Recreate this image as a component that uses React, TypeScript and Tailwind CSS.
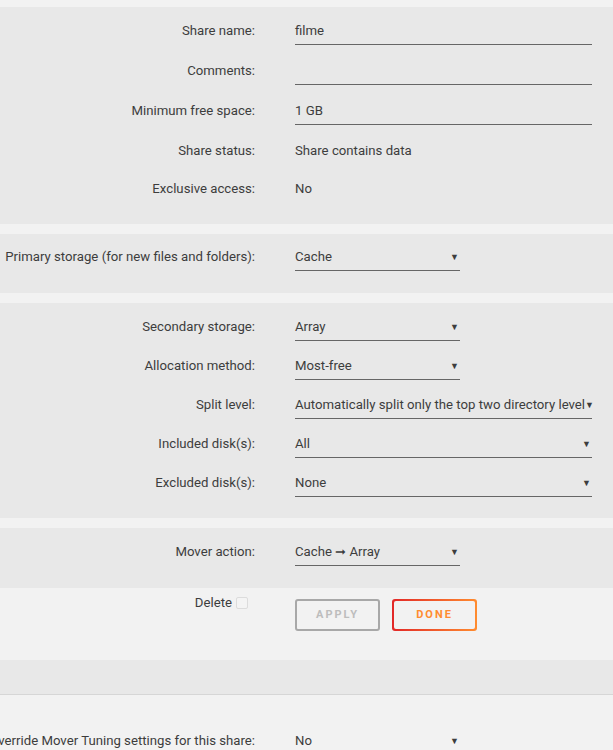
import React from 'react';

type RowProps = {
  label: string;
  children: React.ReactNode;
  h?: string;
};

const Row: React.FC<RowProps> = ({ label, children, h = 'h-[40px]' }) => (
  <div className={`flex items-start ${h}`}>
    <div className="w-[255px] shrink-0 flex justify-end overflow-hidden pt-[6px] leading-5">
      <span className="whitespace-nowrap">{label}</span>
    </div>
    <div className="ml-[40px] flex-1 pr-[21px]">{children}</div>
  </div>
);

const TextInput = ({ value }: { value: string }) => (
  <div className="h-[30px] pt-[6px] leading-5 border-b border-[#666] w-[297px]">{value}</div>
);

const Select = ({ value, wide = false }: { value: string; wide?: boolean }) => (
  <div
    className={`h-[30px] pt-[6px] leading-5 border-b border-[#666] flex justify-between items-start ${
      wide ? 'w-[297px]' : 'w-[165px]'
    }`}
  >
    <span className="whitespace-nowrap">{value}</span>
    <span className="text-[9px] leading-5 pr-[1px]">▼</span>
  </div>
);

const Plain = ({ value }: { value: string }) => <div className="pt-[6px] leading-5">{value}</div>;

export default function App() {
  return (
    <div className="w-[613px] h-[750px] overflow-hidden bg-[#f2f2f2] text-[13.2px] text-[#3d3d3d] font-['Roboto',sans-serif] pt-[7px]">
      {/* share basics */}
      <section className="bg-[#e8e8e8] pt-[8px] pb-[13px]">
        <Row label="Share name:">
          <TextInput value="filme" />
        </Row>
        <Row label="Comments:">
          <TextInput value="" />
        </Row>
        <Row label="Minimum free space:">
          <TextInput value="1 GB" />
        </Row>
        <Row label="Share status:" h="h-[38px]">
          <Plain value="Share contains data" />
        </Row>
        <Row label="Exclusive access:" h="h-[38px]">
          <Plain value="No" />
        </Row>
      </section>

      <section className="bg-[#e8e8e8] mt-[10px] pt-[7px] pb-[12px]">
        <Row label="Primary storage (for new files and folders):">
          <Select value="Cache" />
        </Row>
      </section>

      <section className="bg-[#e8e8e8] mt-[10px] pt-[8px] pb-[12px]">
        <Row label="Secondary storage:" h="h-[39px]">
          <Select value="Array" />
        </Row>
        <Row label="Allocation method:" h="h-[39px]">
          <Select value="Most-free" />
        </Row>
        <Row label="Split level:" h="h-[39px]">
          <Select value="Automatically split only the top two directory level" wide />
        </Row>
        <Row label="Included disk(s):" h="h-[39px]">
          <Select value="All" wide />
        </Row>
        <Row label="Excluded disk(s):" h="h-[39px]">
          <Select value="None" wide />
        </Row>
      </section>

      <section className="bg-[#e8e8e8] mt-[10px] pt-[8px] pb-[12px]">
        <Row label="Mover action:">
          <Select value="Cache ➞ Array" />
        </Row>
      </section>

      {/* actions */}
      <div className="h-[72px] flex items-start">
        <div className="w-[255px] shrink-0 flex justify-end items-center gap-[4px] pt-[5px] pr-[7px] leading-5">
          <span>Delete</span>
          <span className="w-[12px] h-[12px] rounded-[2px] border border-[#dcdcdc] bg-[#f4f4f4]" />
        </div>
        <div className="ml-[40px] flex gap-[12px] pt-[11px]">
          <button className="w-[85px] h-[32px] rounded-[3px] border-2 border-[#a8a8a8] text-[11px] font-bold tracking-[2px] text-[#bdbdbd]">
            APPLY
          </button>
          <div className="w-[85px] h-[32px] rounded-[3px] p-[2px] bg-[linear-gradient(90deg,#e22828,#ff8c2f)]">
            <button className="w-full h-full rounded-[2px] bg-[#f2f2f2] text-[11px] font-bold tracking-[2px] text-[#ff8c2f]">
              DONE
            </button>
          </div>
        </div>
      </div>

      <div className="h-[35px] bg-[#e8e8e8] border-b border-[#d6d6d6]" />

      <div className="pt-[30px]">
        <Row label="Override Mover Tuning settings for this share:">
          <Select value="No" />
        </Row>
      </div>
    </div>
  );
}
